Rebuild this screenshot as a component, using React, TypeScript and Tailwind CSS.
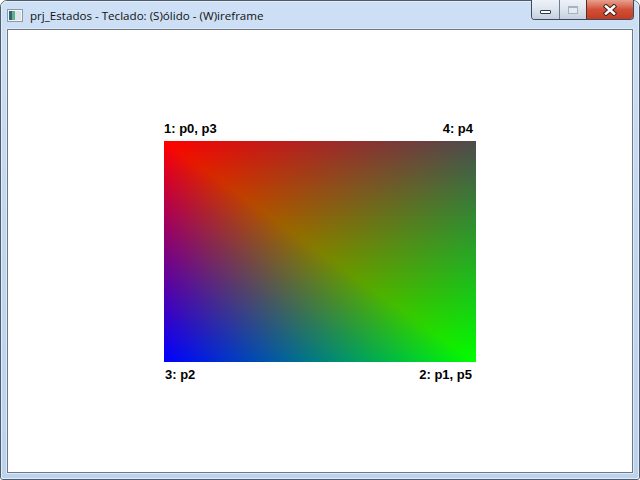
const W = 312;
const H = 221;

/* feet of the perpendiculars on the diagonal TL-BR */
const DD = W * W + H * H;
const tBL = (H * H) / DD;
const tTR = (W * W) / DD;

function ShadedQuad() {
  return (
    <svg width={W} height={H} viewBox={`0 0 ${W} ${H}`} className="block">
      <defs>
        <linearGradient id="t1r" gradientUnits="userSpaceOnUse" x1="0" y1="0" x2="0" y2={H}>
          <stop offset="0" stopColor="#ff0000" />
          <stop offset="1" stopColor="#000000" />
        </linearGradient>
        <linearGradient id="t1g" gradientUnits="userSpaceOnUse" x1={W} y1={H} x2="0" y2={H}>
          <stop offset="0" stopColor="#00ff00" />
          <stop offset="1" stopColor="#000000" />
        </linearGradient>
        <linearGradient id="t1b" gradientUnits="userSpaceOnUse" x1="0" y1={H} x2={W * tBL} y2={H * tBL}>
          <stop offset="0" stopColor="#0000ff" />
          <stop offset="1" stopColor="#000000" />
        </linearGradient>
        <linearGradient id="t2r" gradientUnits="userSpaceOnUse" x1="0" y1="0" x2={W} y2="0">
          <stop offset="0" stopColor="#ff0000" />
          <stop offset="1" stopColor="#000000" />
        </linearGradient>
        <linearGradient id="t2g" gradientUnits="userSpaceOnUse" x1={W} y1={H} x2={W} y2="0">
          <stop offset="0" stopColor="#00ff00" />
          <stop offset="1" stopColor="#000000" />
        </linearGradient>
        <linearGradient id="t2k" gradientUnits="userSpaceOnUse" x1={W} y1="0" x2={W * tTR} y2={H * tTR}>
          <stop offset="0" stopColor="#4c4c4c" />
          <stop offset="1" stopColor="#000000" />
        </linearGradient>
      </defs>
      <g className="isolate">
        <rect width={W} height={H} fill="#000" />
        <polygon points={`0,0 ${W},${H} 0,${H}`} fill="url(#t1r)" className="mix-blend-plus-lighter" />
        <polygon points={`0,0 ${W},${H} 0,${H}`} fill="url(#t1g)" className="mix-blend-plus-lighter" />
        <polygon points={`0,0 ${W},${H} 0,${H}`} fill="url(#t1b)" className="mix-blend-plus-lighter" />
        <polygon points={`0,0 ${W},0 ${W},${H}`} fill="url(#t2r)" className="mix-blend-plus-lighter" />
        <polygon points={`0,0 ${W},0 ${W},${H}`} fill="url(#t2g)" className="mix-blend-plus-lighter" />
        <polygon points={`0,0 ${W},0 ${W},${H}`} fill="url(#t2k)" className="mix-blend-plus-lighter" />
      </g>
    </svg>
  );
}

function AppIcon() {
  return (
    <svg width="16" height="16" viewBox="0 0 16 16" className="block">
      <rect x="0.5" y="1.5" width="15" height="12" fill="#f3f5f7" stroke="#8e99a5" />
      <rect x="2" y="3" width="3" height="9" fill="#2f6478" />
      <rect x="5" y="3" width="3" height="9" fill="#63ae8c" />
      <rect x="8" y="3" width="6" height="9" fill="#dde3e8" />
    </svg>
  );
}

function CaptionButtons() {
  return (
    <div className="flex h-[20px] overflow-hidden rounded-b-[4px] border border-t-0 border-[#3e4b5c]">
      {/* minimize */}
      <div className="flex w-[27px] items-end justify-center bg-gradient-to-b from-[#eef2f7] via-[#dce4ee] to-[#c6d1de] pb-[5px]">
        <div className="h-[4px] w-[11px] rounded-[1px] border border-[#2e3846] bg-white" />
      </div>
      {/* maximize (disabled) */}
      <div className="flex w-[27px] items-center justify-center border-l border-[#6f7c8c] bg-gradient-to-b from-[#eef2f7] via-[#dce4ee] to-[#c6d1de]">
        <div className="h-[8px] w-[10px] border border-t-2 border-[#a7b2bf] bg-[#e6ebf1]" />
      </div>
      {/* close */}
      <div className="flex w-[47px] items-center justify-center border-l border-[#5a2a24] bg-gradient-to-b from-[#e6a08e] via-[#d24f38] to-[#c33c22]">
        <svg width="16" height="12" viewBox="0 0 16 12" className="block">
          <path d="M4 2.5 L12 9.5 M12 2.5 L4 9.5" stroke="#3b1f1a" strokeWidth="4.4" strokeLinecap="square" />
          <path d="M4 2.5 L12 9.5 M12 2.5 L4 9.5" stroke="#ffffff" strokeWidth="2.6" strokeLinecap="square" />
        </svg>
      </div>
    </div>
  );
}

export default function App() {
  return (
    <div className="h-[480px] w-[640px] bg-white">
      <div className="flex h-full w-full flex-col rounded-t-[7px] rounded-b-[3px] border border-[#505c6b]">
        <div className="flex h-full flex-col rounded-t-[6px] rounded-b-[2px] border border-[#e3edf8] bg-gradient-to-b from-[#cde0f5] via-[#c0d7f0] to-[#bcd3ee]">
          {/* Title bar */}
          <div className="flex h-[27px] shrink-0 items-start">
            <div className="flex h-[27px] items-center pl-[5px]">
              <AppIcon />
              <span className="ml-[7px] text-[11.6px] text-[#111]" style={{ fontFamily: '"Open Sans", "Noto Sans", sans-serif' }}>
                prj_Estados - Teclado: (S)ólido - (W)ireframe
              </span>
            </div>
            <div className="-mt-[2px] ml-auto mr-[4px]">
              <CaptionButtons />
            </div>
          </div>

          {/* Client area */}
          <div className="mx-[5px] mb-[5px] flex flex-1 items-center justify-center border border-[#6d7888] bg-white ring-1 ring-[#e0eaf6]">
            <div className="flex w-[312px] flex-col text-[13px] font-bold leading-none text-black" style={{ fontFamily: '"Liberation Sans", Arial, sans-serif' }}>
              <div className="mb-[6px] flex h-[16px] items-end justify-between">
                <span>1: p0, p3</span>
                <span className="mr-[3px]">4: p4</span>
              </div>
              <ShadedQuad />
              <div className="mt-[6px] flex h-[16px] items-start justify-between">
                <span className="ml-[1px]">3: p2</span>
                <span className="mr-[4px]">2: p1, p5</span>
              </div>
            </div>
          </div>
        </div>
      </div>
    </div>
  );
}
